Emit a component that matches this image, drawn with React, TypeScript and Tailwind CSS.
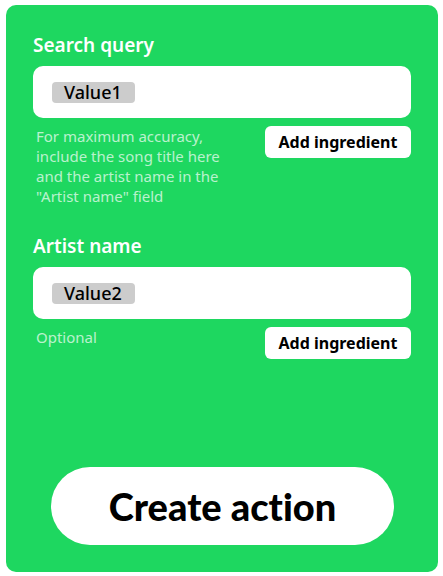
type FieldProps = {
  id: string;
  label: string;
  value: string;
  hint: string;
};

function IngredientField({ id, label, value, hint }: FieldProps) {
  return (
    <section>
      <label htmlFor={id} className="block text-[19px] leading-[22px] font-semibold text-white">
        {label}
      </label>
      <div className="mt-[10px] flex h-[52px] items-center rounded-[10px] bg-white px-[19px]">
        <span className="flex h-[21px] w-[83px] shrink-0 items-center rounded bg-[#cccccc] px-3 text-lg leading-5 font-medium">
          {value}
        </span>
        <input
          id={id}
          type="text"
          aria-describedby={`${id}-hint`}
          className="h-full min-w-0 flex-1 bg-transparent pl-2 text-lg outline-none"
        />
      </div>
      <div className="mt-2 flex items-start justify-between gap-8">
        <p id={`${id}-hint`} className="max-w-[204px] pl-[3px] text-[15px] leading-5 text-white/70">
          {hint}
        </p>
        <button
          type="button"
          className="h-8 w-[146px] shrink-0 rounded-md bg-white text-base leading-5 font-bold whitespace-nowrap"
        >
          Add ingredient
        </button>
      </div>
    </section>
  );
}

export default function App() {
  return (
    <main className="bg-white pt-[5px] pr-[5px] pb-1 pl-[6px] font-['Noto_Sans','Liberation_Sans',sans-serif] text-black">
      <form
        className="rounded-[10px] bg-[#1ed760] px-[27px] pt-[29px] pb-[27px]"
        onSubmit={(event) => event.preventDefault()}
      >
        <div className="flex flex-col gap-[29px]">
          <IngredientField
            id="search-query"
            label="Search query"
            value="Value1"
            hint={'For maximum accuracy, include the song title here and the artist name in the "Artist name" field'}
          />
          <IngredientField id="artist-name" label="Artist name" value="Value2" hint="Optional" />
        </div>
        <div className="mt-[108px] pr-[17px] pl-[18px]">
          <button
            type="submit"
            className="h-[78px] w-full rounded-full bg-white font-['Lato','Liberation_Sans',sans-serif] text-[38px] font-black [font-variant-ligatures:none]"
          >
            Create action
          </button>
        </div>
      </form>
    </main>
  );
}
